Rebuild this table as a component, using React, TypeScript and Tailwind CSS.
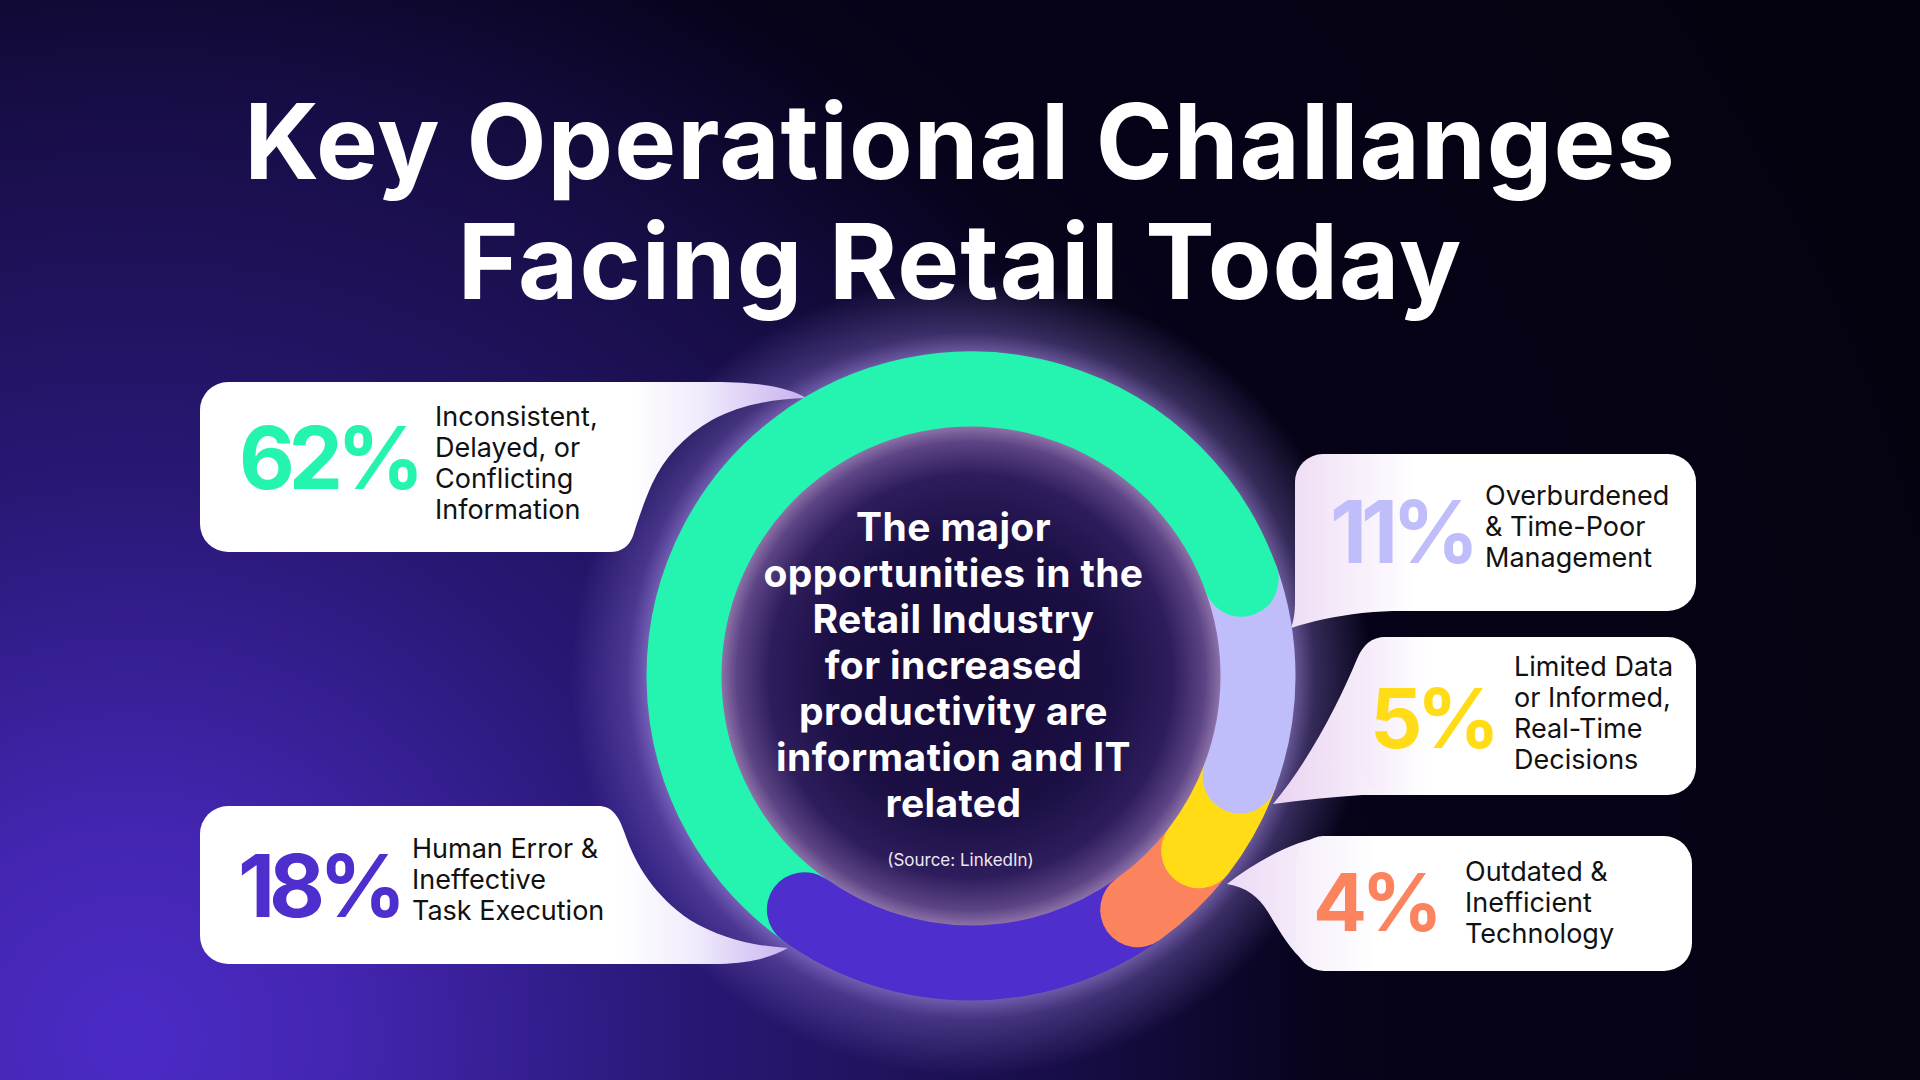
import React from "react";

const CX = 971;
const CY = 676;
const R = 287;

const pt = (a: number) => {
  const r = (a * Math.PI) / 180;
  return [CX + R * Math.cos(r), CY + R * Math.sin(r)];
};

const arc = (a1: number, a2: number) => {
  const [x1, y1] = pt(a1);
  const [x2, y2] = pt(a2);
  const large = a2 - a1 > 180 ? 1 : 0;
  return `M${x1} ${y1} A${R} ${R} 0 ${large} 1 ${x2} ${y2}`;
};

// segments in draw order (each end cap sits over the next one)
const segments = [
  { from: 54.5, to: 125.5, color: "#4e2ecc" },
  { from: 37.5, to: 54.5, color: "#fb845e" },
  { from: 20.4, to: 37.5, color: "#ffdc16" },
  { from: -19.7, to: 20.4, color: "#c0bdfb" },
  { from: 125.5, to: 340.3, color: "#25f4b1" },
  { from: 100, to: 125.5, color: "#4e2ecc" },
];

const Backdrop = () => (
  <svg
    className="absolute inset-0 h-full w-full"
    viewBox="0 0 1920 1080"
    fill="none"
  >
    <defs>
      <radialGradient id="glow" cx={CX} cy={CY} r="400" gradientUnits="userSpaceOnUse">
        <stop offset="0.78" stopColor="#b59cf0" stopOpacity="0.75" />
        <stop offset="0.86" stopColor="#9a7fe0" stopOpacity="0.32" />
        <stop offset="1" stopColor="#9a7fe0" stopOpacity="0" />
      </radialGradient>
      <radialGradient id="disc" cx={CX} cy={CY} r="252" gradientUnits="userSpaceOnUse">
        <stop offset="0" stopColor="#150a37" />
        <stop offset="0.55" stopColor="#1b0f44" />
        <stop offset="0.8" stopColor="#2e1d5c" />
        <stop offset="0.93" stopColor="#5d4585" />
        <stop offset="1" stopColor="#9478ad" />
      </radialGradient>
      <linearGradient id="gA" x1="630" y1="0" x2="806" y2="0" gradientUnits="userSpaceOnUse">
        <stop offset="0" stopColor="#ffffff" />
        <stop offset="0.4" stopColor="#f1ebfc" />
        <stop offset="1" stopColor="#c7b1ee" />
      </linearGradient>
      <linearGradient id="gB" x1="620" y1="0" x2="788" y2="0" gradientUnits="userSpaceOnUse">
        <stop offset="0" stopColor="#ffffff" />
        <stop offset="0.45" stopColor="#f0ebfc" />
        <stop offset="1" stopColor="#c9b5f0" />
      </linearGradient>
      <linearGradient id="gC" x1="1295" y1="0" x2="1415" y2="0" gradientUnits="userSpaceOnUse">
        <stop offset="0" stopColor="#efdef6" />
        <stop offset="1" stopColor="#ffffff" />
      </linearGradient>
      <linearGradient id="gD" x1="1273" y1="0" x2="1430" y2="0" gradientUnits="userSpaceOnUse">
        <stop offset="0" stopColor="#e9d3f2" />
        <stop offset="1" stopColor="#ffffff" />
      </linearGradient>
      <linearGradient id="gE" x1="1227" y1="0" x2="1390" y2="0" gradientUnits="userSpaceOnUse">
        <stop offset="0" stopColor="#ecdaf5" />
        <stop offset="1" stopColor="#ffffff" />
      </linearGradient>
    </defs>

    <circle cx={CX} cy={CY} r="400" fill="url(#glow)" />

    {/* card tails running into the ring */}
    <path
      d="M600 382 L715 382 C760 382 790 388 806 398 C770 399 738 406 712 420 C684 436 664 458 652 484 C644 502 638 520 633 536 C629 546 622 552 610 552 L600 552 Z"
      fill="url(#gA)"
    />
    <path
      d="M592 806 L598 806 C612 806 619 816 625 834 C636 866 655 896 690 920 C720 938 752 946 788 948 C772 957 752 963 720 964 L592 964 Z"
      fill="url(#gB)"
    />
    <path
      d="M1295 560 L1295 600 C1295 612 1294 620 1291 628 C1312 621 1336 616 1362 613 C1378 611.5 1390 611 1400 611 L1400 560 Z"
      fill="url(#gC)"
    />
    <path
      d="M1400 637 L1386 637 C1371 637 1363 645 1357 659 C1340 700 1310 760 1273 804 C1302 800 1332 797 1362 795 L1400 795 Z"
      fill="url(#gD)"
    />
    <path
      d="M1345 836 L1325 836 C1292 842 1256 861 1227 884 C1246 887 1258 896 1268 912 C1280 932 1290 950 1305 962 L1345 962 Z"
      fill="url(#gE)"
    />

    <circle cx={CX} cy={CY} r="252" fill="url(#disc)" />

    {segments.map((s, i) => (
      <path
        key={i}
        d={arc(s.from, s.to)}
        stroke={s.color}
        strokeWidth="75"
        strokeLinecap="round"
      />
    ))}
  </svg>
);

type StatProps = {
  value: string;
  color: string;
  lines: string[];
  className: string;
  numClass: string;
  labelClass: string;
};

const Stat = ({ value, color, lines, className, numClass, labelClass }: StatProps) => (
  <div className={`flex items-start rounded-[28px] ${className}`}>
    <span
      className={`shrink-0 whitespace-nowrap font-bold leading-none tracking-[-0.07em] ${numClass}`}
      style={{ color }}
    >
      {value}
    </span>
    <p className={`text-[27px] leading-[31px] text-[#111111] ${labelClass}`}>
      {lines.map((l, i) => (
        <span key={i} className="block whitespace-nowrap">
          {l}
        </span>
      ))}
    </p>
  </div>
);

export default function App() {
  return (
    <div className="relative h-[1080px] w-[1920px] overflow-hidden bg-[radial-gradient(circle_at_130px_1040px,#4b2bc6_0px,#4426b3_200px,#2a1876_550px,#170d45_950px,#06031a_1200px,#05020f_2000px)] font-['Inter','Liberation_Sans',sans-serif]">
      <Backdrop />

      <div className="relative z-10 flex flex-col">
        <h1 className="h-[323px] pt-[81px] text-center text-[104px] font-bold leading-[120px] tracking-[0.01em] text-white">
          Key Operational Challanges
          <br />
          Facing Retail Today
        </h1>

        <div className="flex h-[757px] pl-[200px]">
          <div className="flex w-[430px] flex-col">
            <Stat
              value="62%"
              color="#25f4b1"
              lines={["Inconsistent,", "Delayed, or", "Conflicting", "Information"]}
              className="mt-[59px] h-[170px] w-[430px] bg-white pl-[39px]"
              numClass="mt-[33px] w-[196px] text-[86px]"
              labelClass="mt-[19px]"
            />
            <Stat
              value="18%"
              color="#4e2ecc"
              lines={["Human Error &", "Ineffective", "Task Execution"]}
              className="mt-[254px] h-[158px] w-[420px] bg-white pl-[38px]"
              numClass="mt-[37px] w-[174px] text-[86px]"
              labelClass="mt-[27px]"
            />
          </div>

          <div className="flex w-[665px] flex-col items-center pr-[18px] pt-[181px] text-center text-white">
            <p className="text-[39px] font-bold leading-[46px] tracking-[0.01em]">
              The major
              <br />
              opportunities in the
              <br />
              Retail Industry
              <br />
              for increased
              <br />
              productivity are
              <br />
              information and IT
              <br />
              related
            </p>
            <p className="mt-[24px] pl-[14px] text-[17px] leading-[20px] text-[#ece8f4]">(Source: LinkedIn)</p>
          </div>

          <div className="flex w-[401px] flex-col items-end">
            <Stat
              value="11%"
              color="#c0bdfb"
              lines={["Overburdened", "& Time-Poor", "Management"]}
              className="mt-[131px] h-[157px] w-[401px] bg-[linear-gradient(to_right,#efdef6,#ffffff_30%)] pl-[35px]"
              numClass="mt-[35px] w-[155px] text-[86px]"
              labelClass="mt-[26px]"
            />
            <Stat
              value="5%"
              color="#ffdc16"
              lines={["Limited Data", "or Informed,", "Real-Time", "Decisions"]}
              className="mt-[26px] h-[158px] w-[336px] bg-[linear-gradient(to_right,#f4e9f8,#ffffff_20%)] pl-[10px]"
              numClass="mt-[41px] w-[144px] text-[82px]"
              labelClass="mt-[14px]"
            />
            <Stat
              value="4%"
              color="#fb845e"
              lines={["Outdated &", "Inefficient", "Technology"]}
              className="mr-[4px] mt-[41px] h-[135px] w-[396px] bg-[linear-gradient(to_right,#f6eefa,#ffffff_20%)] pl-[17px]"
              numClass="mt-[26px] w-[152px] text-[80px]"
              labelClass="mt-[20px]"
            />
          </div>
        </div>
      </div>
    </div>
  );
}
